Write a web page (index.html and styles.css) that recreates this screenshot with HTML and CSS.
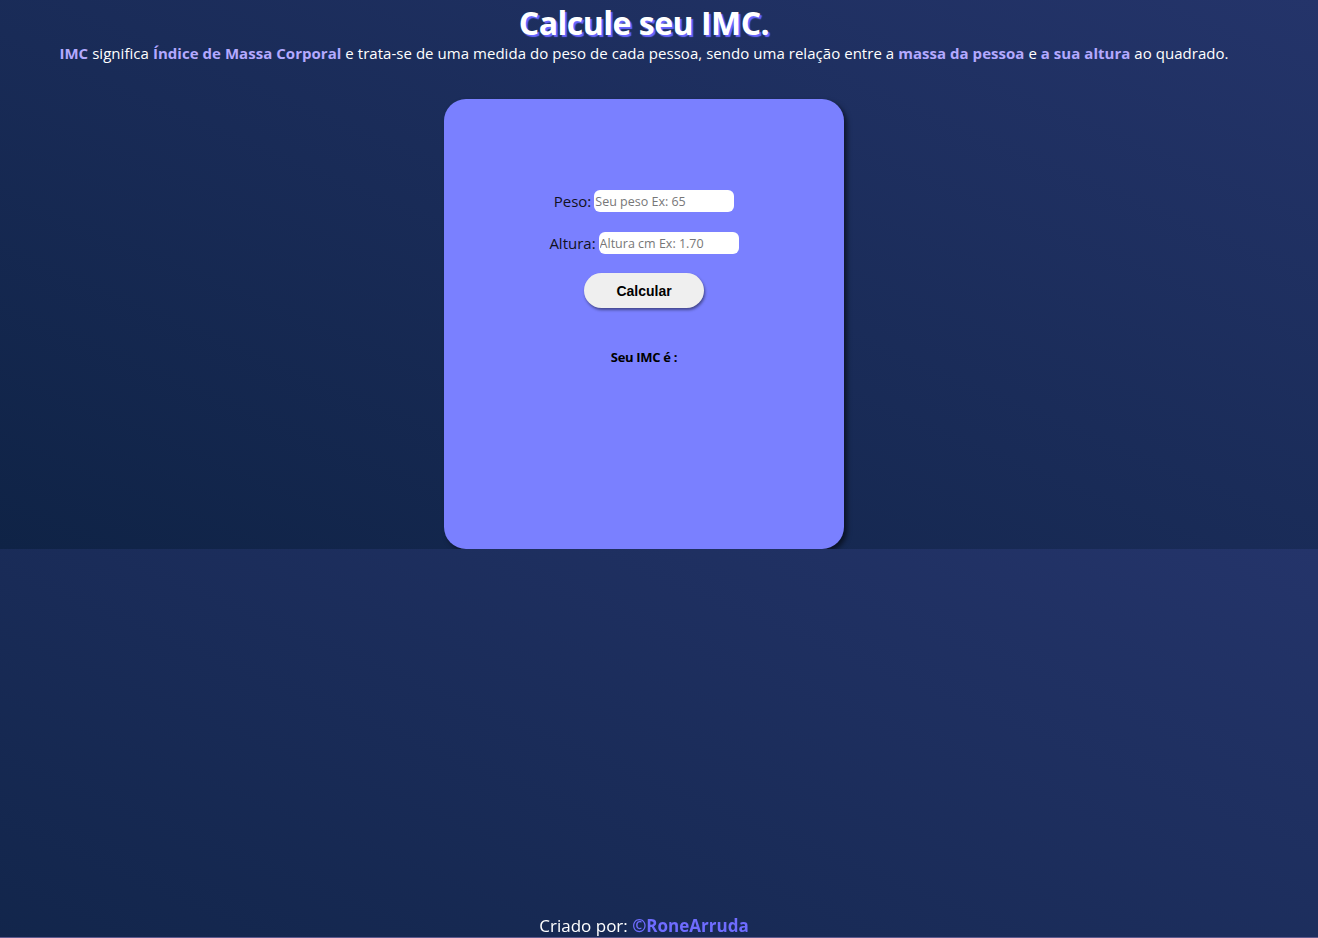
FILE: index.html
```html
<!DOCTYPE html>
<html lang="pt-BR">
<head>
<meta charset="UTF-8">
<title>Calcule seu IMC</title>
<link rel="stylesheet" href="styles.css">
</head>
<body>
<main class="page">
  <h1 class="title">Calcule seu IMC.</h1>
  <p class="intro"><strong class="hl">IMC</strong> significa <strong class="hl">Índice de Massa Corporal</strong> e trata-se de uma medida do peso de cada pessoa, sendo uma relação entre a <strong class="hl">massa da pessoa</strong> e <strong class="hl">a sua altura</strong> ao quadrado.</p>
  <section class="card">
    <div class="row">
      <label class="label" for="peso">Peso:</label><input class="field" id="peso" type="text" placeholder="Seu peso Ex: 65">
    </div>
    <div class="row">
      <label class="label" for="altura">Altura:</label><input class="field" id="altura" type="text" placeholder="Altura cm Ex: 1.70">
    </div>
    <button class="btn" type="button">Calcular</button>
    <p class="result">Seu IMC é :</p>
  </section>
</main>
<footer class="footer">Criado por: <a class="author" href="#">©RoneArruda</a></footer>
</body>
</html>
```

FILE: styles.css
```css
html {
  margin: 0;
}
body {
  margin: 0;
  font-family: "Open Sans", "Noto Sans", sans-serif;
  color: #ffffff;
  background: linear-gradient(to right top, #0f2346, #24346a);
}
.page {
  margin-right: 30px;
  display: flex;
  flex-direction: column;
  align-items: center;
}
.title {
  margin: 0;
  padding-top: 2px;
  font-size: 32px;
  line-height: 42px;
  font-weight: 700;
  color: #ffffff;
  text-shadow: 2px 2px 1px #6a67ff;
  letter-spacing: -0.5px;
}
.intro {
  margin: 0;
  font-size: 15px;
  line-height: 18px;
  text-align: center;
  letter-spacing: 0.04px;
}
.hl {
  color: #b3a9ff;
  font-weight: 700;
}
.card {
  margin-top: 37px;
  width: 400px;
  height: 450px;
  box-sizing: border-box;
  padding-top: 90px;
  background: #7a80ff;
  border-radius: 22px;
  box-shadow: 3px 3px 5px rgba(0, 0, 0, 0.55);
  display: flex;
  flex-direction: column;
  align-items: center;
  color: #111111;
}
.row {
  display: flex;
  align-items: center;
  height: 24px;
  margin-bottom: 18px;
}
.label {
  font-size: 15px;
  margin-right: 3px;
  color: #111122;
}
.field {
  width: 140px;
  height: 22px;
  box-sizing: border-box;
  border: none;
  border-radius: 6px;
  padding: 0 1px;
  font-family: "Open Sans", "Noto Sans", sans-serif;
  font-size: 12.5px;
  background: #ffffff;
  outline: none;
}
.field::placeholder {
  color: #777777;
}
.btn {
  width: 120px;
  height: 35px;
  border: none;
  border-radius: 18px;
  background: #efefef;
  font-family: "Liberation Sans", Arial, sans-serif;
  font-weight: 700;
  font-size: 14px;
  color: #000000;
  box-shadow: 1px 2px 3px rgba(0, 0, 0, 0.45);
  cursor: pointer;
}
.result {
  margin: 40px 0 0;
  font-size: 13px;
  font-weight: 700;
  color: #000000;
  letter-spacing: -0.3px;
}
.footer {
  position: fixed;
  left: 0;
  right: 0;
  bottom: 0;
  padding-right: 30px;
  text-align: center;
  font-size: 17px;
  line-height: 22px;
  color: #ffffff;
  border-bottom: 1px solid #5f5a8e;
}
.author {
  color: #6f6cff;
  font-weight: 700;
  text-decoration: none;
}
```
